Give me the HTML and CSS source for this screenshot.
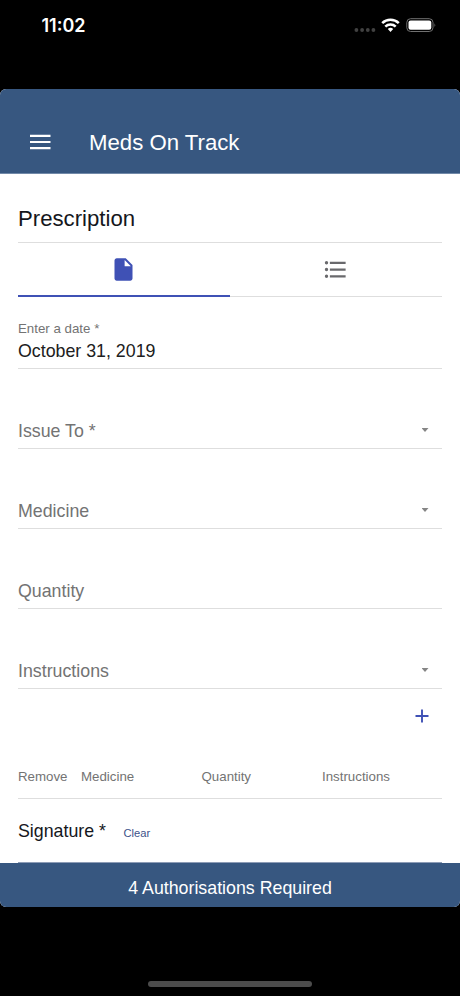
FILE: index.html
```html
<!DOCTYPE html>
<html lang="en">
<head>
<meta charset="utf-8">
<title>Meds On Track</title>
<link rel="stylesheet" href="styles.css">
</head>
<body>
<div class="status">
  <span class="time">11:02</span>
  <svg class="status-icons" width="84" height="20" viewBox="0 0 84 20">
    <g fill="#414141"><circle cx="3.4" cy="14" r="1.9"/><circle cx="9.1" cy="14" r="1.9"/><circle cx="14.8" cy="14" r="1.9"/><circle cx="20.4" cy="14" r="1.9"/></g>
    <g fill="none" stroke="#fff" stroke-width="2.5"><path d="M29.2 7.2a11.8 11.8 0 0 1 16.6 0"/><path d="M32.3 10.7a7.4 7.4 0 0 1 10.4 0"/></g>
    <path d="M37.5 15.9l-2.7-2.8a3.9 3.9 0 0 1 5.4 0z" fill="#fff"/>
    <rect x="53.8" y="2.7" width="26.2" height="12.8" rx="3.8" fill="none" stroke="#707070"/>
    <rect x="55.500" y="4.4" width="22.8" height="9.4" rx="2.1" fill="#fff"/>
    <path d="M81.500 7.2q1.8 1.9 0 3.8z" fill="#707070"/>
  </svg>
</div>
<div class="app">
  <header class="toolbar">
    <svg class="menu" width="24" height="24" viewBox="0 0 24 24"><path d="M2 5.9h20.500M2 12h20.500M2 18.1h20.500" stroke="#fff" stroke-width="2.200"/></svg>
    <span class="brand">Meds On Track</span>
  </header>
  <main class="content">
    <h1 class="title">Prescription</h1>
    <nav class="tabs">
      <div class="tab active"><svg width="27" height="27" viewBox="0 0 24 24"><path fill="#3f51b5" d="M6 2c-1.1 0-2 .9-2 2v16c0 1.1.9 2 2 2h12c1.1 0 2-.9 2-2V8l-6-6H6zm7 7V3.5L18.500 9H13z"/></svg></div>
      <div class="tab"><svg width="27" height="27" viewBox="0 0 24 24"><path fill="#69696c" d="M4 10.500a1.500 1.500 0 1 0 0 3 1.500 1.500 0 0 0 0-3zm0-6a1.500 1.500 0 1 0 0 3 1.500 1.500 0 0 0 0-3zm0 12a1.500 1.500 0 1 0 0 3 1.500 1.500 0 0 0 0-3zM7 19h14v-2H7v2zm0-6h14v-2H7v2zm0-8v2h14V5H7z"/></svg></div>
    </nav>
    <div class="field date"><div><div class="label">Enter a date *</div><div class="value">October 31, 2019</div></div></div>
    <div class="field"><span>Issue To *</span><i class="arrow"></i></div>
    <div class="field"><span>Medicine</span><i class="arrow"></i></div>
    <div class="field"><span>Quantity</span></div>
    <div class="field"><span>Instructions</span><i class="arrow"></i></div>
    <div class="add"><svg width="14" height="14" viewBox="0 0 14 14"><path d="M7 .5v13M.5 7h13" stroke="#3f51b5" stroke-width="1.9"/></svg></div>
    <div class="columns"><span>Remove</span><span>Medicine</span><span>Quantity</span><span>Instructions</span></div>
    <div class="signature"><span>Signature *</span><span class="clear">Clear</span></div>
  </main>
  <footer class="footer">4 Authorisations Required</footer>
</div>
<div class="home"></div>
</body>
</html>
```

FILE: styles.css
```css
* { box-sizing: border-box; }
body {
  margin: 0;
  width: 460px;
  height: 996px;
  display: flex;
  flex-direction: column;
  background: #000;
  font-family: "Liberation Sans", Arial, sans-serif;
  overflow: hidden;
}
svg { display: block; flex: none; }
.status {
  height: 89px;
  padding: 16px 23px 0 41.500px;
  display: flex;
  justify-content: space-between;
  align-items: flex-start;
  color: #fff;
}
.time { font: 600 18px/20px Inter, sans-serif; }
.app {
  height: 818px;
  display: flex;
  flex-direction: column;
  border-radius: 6px;
  overflow: hidden;
  background: #fff;
}
.toolbar {
  height: 85px;
  flex: none;
  padding: 41px 28px 0;
  display: flex;
  background: #375780;
  color: #fff;
  border-bottom: 1px solid #7189a8;
}
.brand { margin-left: 37px; font-size: 22.2px; line-height: 26px; }
.content { flex: 1; padding: 0 18px; }
.title {
  margin: 0;
  height: 69px;
  padding-top: 32px;
  border-bottom: 1px solid #dedede;
  font-size: 22.2px;
  line-height: 26px;
  font-weight: 400;
  color: #15171c;
}
.tabs { height: 54px; display: flex; }
.tab {
  flex: 1;
  display: flex;
  justify-content: center;
  padding: 12.500px 1.200px 0 0;
  border-bottom: 1px solid #dedede;
}
.tab.active { border-bottom: 2px solid #3f51b5; }
.field {
  height: 80px;
  padding-bottom: 6px;
  display: flex;
  align-items: flex-end;
  justify-content: space-between;
  border-bottom: 1px solid #dedede;
  font-size: 17.8px;
  line-height: 22px;
  color: #737373;
}
.field.date { height: 72px; }
.label { font-size: 13.3px; line-height: 18px; margin-bottom: 2px; }
.value { color: #202020; }
.arrow {
  width: 7px;
  height: 4px;
  margin: 0 13.500px 10px 0;
  background: #858585;
  clip-path: polygon(0 0, 100% 0, 50% 100%);
}
.add { height: 54px; padding: 20px 13px 0 0; display: flex; justify-content: flex-end; }
.columns {
  height: 56px;
  padding-top: 25px;
  display: grid;
  grid-template-columns: 63px 120.500px 120.500px 1fr;
  border-bottom: 1px solid #dedede;
  font-size: 13.3px;
  line-height: 18px;
  color: #737373;
}
.signature {
  height: 64px;
  padding-top: 21px;
  display: flex;
  align-items: baseline;
  border-bottom: 1px solid #8d9cb6;
  font-size: 17.8px;
  line-height: 22px;
  color: #15171c;
}
.clear { margin-left: 17.500px; font-size: 11.2px; color: #3c5289; }
.footer {
  height: 44px;
  flex: none;
  background: #375780;
  color: #fff;
  text-align: center;
  font-size: 17.8px;
  line-height: 50px;
}
.home { width: 164px; height: 6px; margin: 74px auto 0; border-radius: 3px; background: #4c4c4c; }
```
